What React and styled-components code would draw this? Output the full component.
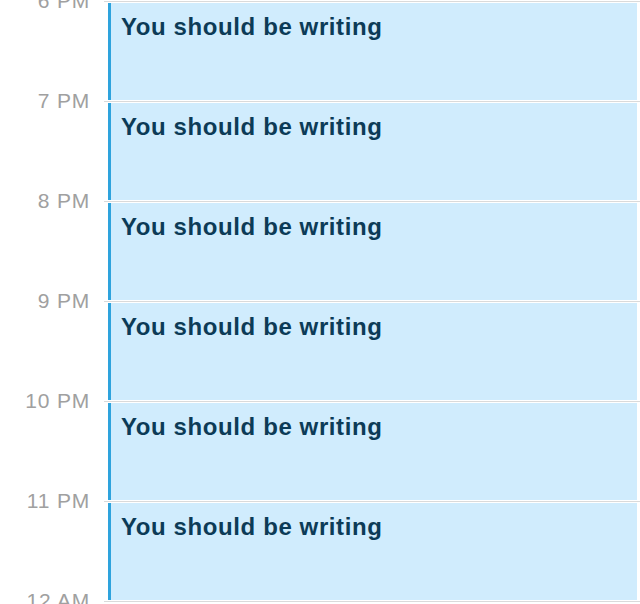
import styled, { createGlobalStyle } from "styled-components";

const GlobalStyle = createGlobalStyle`
	body {
		margin: 0;
		background: #ffffff;
		font-family: "Liberation Sans", Arial, sans-serif;
		overflow: hidden;
	}
`;

const hours = ["6 PM", "7 PM", "8 PM", "9 PM", "10 PM", "11 PM", "12 AM"];

const Calendar = styled.div`
	padding-top: 1px;
	width: 640px;
	height: 604px;
	overflow: hidden;
`;

const HourRow = styled.div`
	display: grid;
	grid-template-columns: 104px 1fr;
	height: 100px;
`;

const TimeLabel = styled.div`
	text-align: right;
	padding-right: 14px;
	font-size: 21px;
	line-height: 24px;
	letter-spacing: 0.8px;
	color: #a0a0a0;
	transform: translateY(-12px);
`;

const Slot = styled.div`
	border-top: 1px solid #dadada;
	padding: 1px 3px 1px 4px;
`;

const EventBlock = styled.div`
	height: 97px;
	box-sizing: border-box;
	background: #d0ecfd;
	border-left: 3px solid #2ea3dd;
	padding: 12px 0 0 10px;
	font-size: 24px;
	line-height: 24px;
	font-weight: 700;
	letter-spacing: 0.6px;
	color: #0c3b57;
`;

export default function App() {
	return (
		<>
			<GlobalStyle />
			<Calendar>
				{hours.map((h, i) => (
					<HourRow key={h}>
						<TimeLabel>{h}</TimeLabel>
						<Slot>
							{i < hours.length - 1 && <EventBlock>You should be writing</EventBlock>}
						</Slot>
					</HourRow>
				))}
			</Calendar>
		</>
	);
}
